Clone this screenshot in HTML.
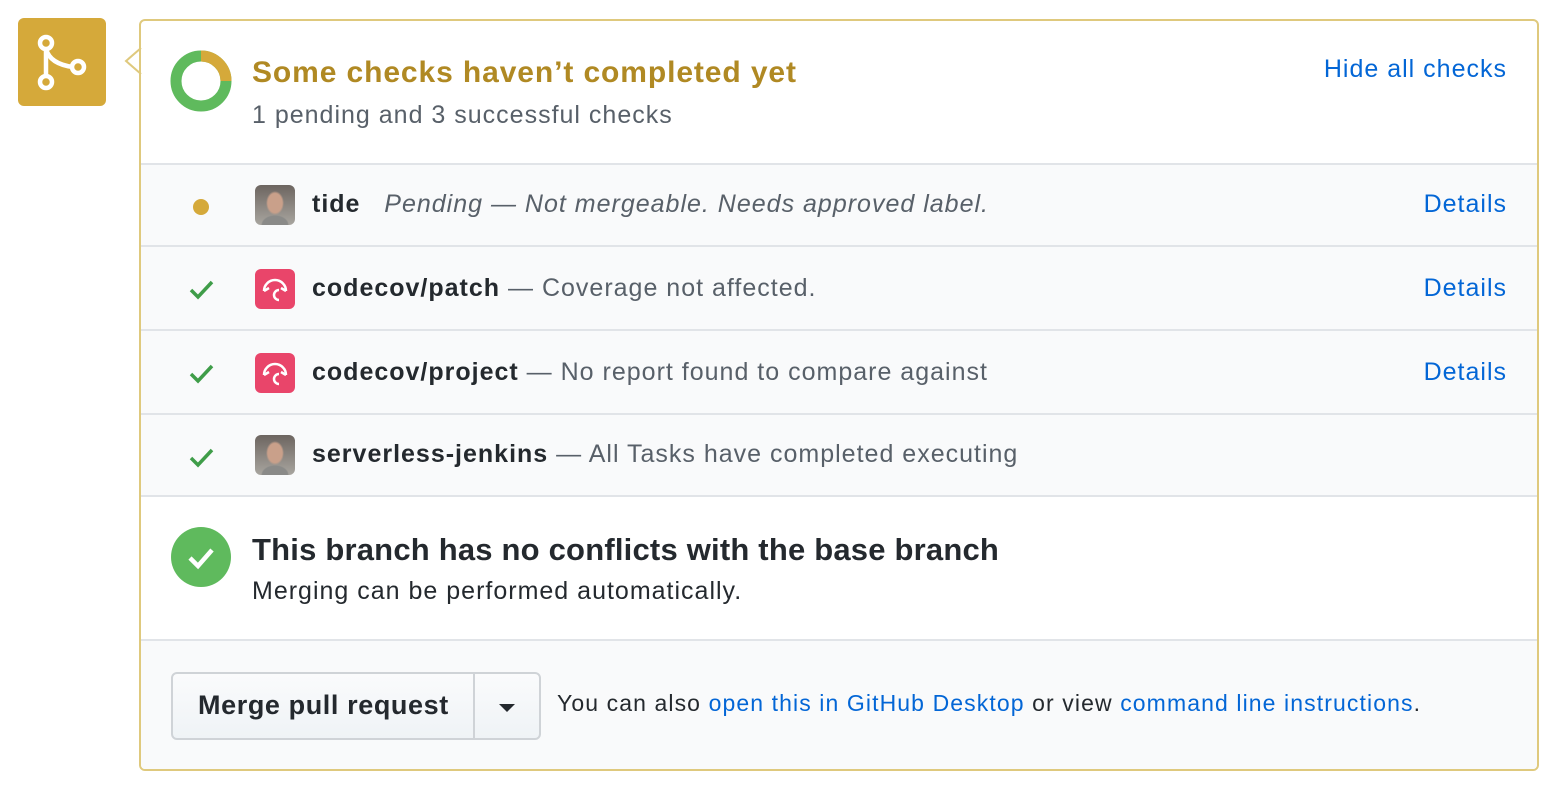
<!DOCTYPE html><html><head><style>
body{margin:0;width:1556px;height:786px;background:#fff;font-family:"Liberation Sans",sans-serif;position:relative;overflow:hidden}
.abs{position:absolute}
.box{left:139px;top:19px;width:1396px;height:748px;border:2px solid #dfc97d;border-radius:6px;overflow:hidden}
.row{position:absolute;left:0;width:1396px;background:#f9fafb;border-top:2px solid #e1e4e8}
.t{position:absolute;font-size:25px;letter-spacing:1px;color:#586069;white-space:nowrap}
.b{color:#24292e;font-weight:bold}
.lnk{color:#0366d6}
.av{position:absolute;left:114px;width:40px;height:40px;border-radius:6px;overflow:hidden}
.ph{background:radial-gradient(ellipse 9px 12px at 50% 45%,#c9a08a 0 80%,transparent 100%),radial-gradient(ellipse 14px 10px at 50% 100%,#8a8a88 0 90%,transparent 100%),linear-gradient(#6d6560,#a8a59f)}
</style></head><body>
<div class="abs" style="left:18px;top:18px;width:88px;height:88px;background:#d5a93a;border-radius:6px">
<svg width="88" height="88" viewBox="0 0 88 88"><g fill="none" stroke="#fff" stroke-width="4.5"><line x1="28" y1="31" x2="28" y2="58"/><path d="M28 31 Q32 46 55 49"/><circle cx="28" cy="25" r="6"/><circle cx="28" cy="64" r="6"/><circle cx="60" cy="49" r="6"/></g></svg></div>
<svg class="abs" style="left:124px;top:48px" width="18" height="26"><path d="M17 0 L2 13 L17 26" fill="#fff" stroke="#dfc97d" stroke-width="2"/></svg>
<div class="abs box">
<svg class="abs" style="left:29px;top:29px" width="62" height="62" viewBox="0 0 62 62"><circle cx="31" cy="31" r="25" fill="none" stroke="#5fba5d" stroke-width="11"/><path d="M31 6 A25 25 0 0 1 56 31" fill="none" stroke="#d5a93a" stroke-width="11"/></svg>
<div class="t" style="left:111px;top:35px;font-size:30px;letter-spacing:0.9px;font-weight:bold;color:#b08923">Some checks haven’t completed yet</div>
<div class="t" style="left:111px;top:80px">1 pending and 3 successful checks</div>
<div class="t lnk" style="right:30px;top:34px">Hide all checks</div>
<div class="row" style="top:142px;height:80px">
<div class="abs" style="left:52px;top:34px;width:16px;height:16px;border-radius:50%;background:#d5a93a"></div>
<div class="av ph" style="top:20px"></div>
<div class="t" style="left:171px;top:25px"><span class="b">tide</span> &nbsp; <i>Pending — Not mergeable. Needs approved label.</i></div>
<div class="t lnk" style="right:30px;top:25px">Details</div></div>
<div class="row" style="top:224px;height:82px">
<svg class="abs" style="left:48px;top:32px" width="26" height="22"><path d="M2 11 L9 18 L23 3" fill="none" stroke="#3f9d49" stroke-width="3.5"/></svg>
<div class="av" style="top:22px;background:#e9456a"><svg width="40" height="40"><path d="M9 22 A11 11 0 0 1 31 22 M9 22 L14 19 M31 22 L26 19 M24 21 A4 4 0 0 0 24 31" fill="none" stroke="#fff" stroke-width="2.5"/></svg></div>
<div class="t" style="left:171px;top:27px"><span class="b">codecov/patch</span> — Coverage not affected.</div>
<div class="t lnk" style="right:30px;top:27px">Details</div></div>
<div class="row" style="top:308px;height:82px">
<svg class="abs" style="left:48px;top:32px" width="26" height="22"><path d="M2 11 L9 18 L23 3" fill="none" stroke="#3f9d49" stroke-width="3.5"/></svg>
<div class="av" style="top:22px;background:#e9456a"><svg width="40" height="40"><path d="M9 22 A11 11 0 0 1 31 22 M9 22 L14 19 M31 22 L26 19 M24 21 A4 4 0 0 0 24 31" fill="none" stroke="#fff" stroke-width="2.5"/></svg></div>
<div class="t" style="left:171px;top:27px"><span class="b">codecov/project</span> — No report found to compare against</div>
<div class="t lnk" style="right:30px;top:27px">Details</div></div>
<div class="row" style="top:392px;height:82px">
<svg class="abs" style="left:48px;top:32px" width="26" height="22"><path d="M2 11 L9 18 L23 3" fill="none" stroke="#3f9d49" stroke-width="3.5"/></svg>
<div class="av ph" style="top:20px"></div>
<div class="t" style="left:171px;top:25px"><span class="b">serverless-jenkins</span> — All Tasks have completed executing</div></div>
<div class="row" style="top:474px;height:144px;background:#fff">
<svg class="abs" style="left:30px;top:30px" width="60" height="60"><circle cx="30" cy="30" r="30" fill="#5fba5d"/><path d="M19 31 L27 39 L41 23" fill="none" stroke="#fff" stroke-width="4.5"/></svg>
<div class="t b" style="left:111px;top:35px;font-size:31px;letter-spacing:0.2px">This branch has no conflicts with the base branch</div>
<div class="t" style="left:111px;top:80px;color:#24292e">Merging can be performed automatically.</div></div>
<div class="row" style="top:618px;height:140px">
<div class="abs" style="left:30px;top:31px;width:366px;height:64px;border:2px solid #cfd3d7;border-radius:6px;background:linear-gradient(#fafbfc,#eff3f6)">
<div class="abs" style="left:300px;top:0;width:2px;height:64px;background:#cfd3d7"></div>
<div class="t b" style="left:25px;top:16px;font-size:27px;letter-spacing:0.6px">Merge pull request</div>
<svg class="abs" style="left:325px;top:29px" width="18" height="10"><path d="M1 1 L17 1 L9 9Z" fill="#24292e"/></svg></div>
<div class="t" style="left:416px;top:49px;color:#24292e;font-size:23px;letter-spacing:1.1px">You can also <span class="lnk">open this in GitHub Desktop</span> or view <span class="lnk">command line instructions</span>.</div></div>
</div>
</body></html>
